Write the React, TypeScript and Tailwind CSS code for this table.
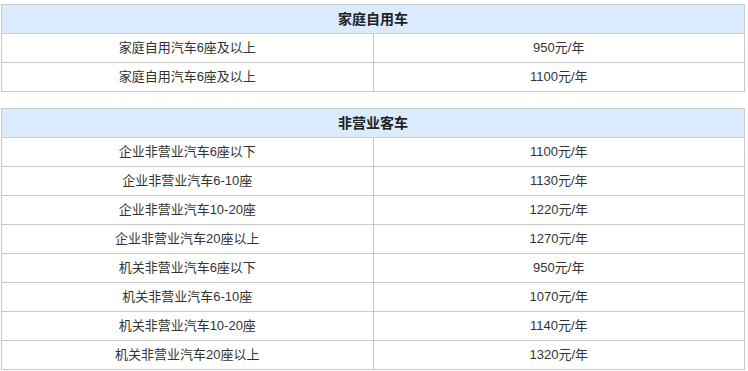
import React from 'react';

interface PriceRow {
  name: string;
  price: string;
}

const familyRows: PriceRow[] = [
  { name: '家庭自用汽车6座及以上', price: '950元/年' },
  { name: '家庭自用汽车6座及以上', price: '1100元/年' },
];

const nonOperatingRows: PriceRow[] = [
  { name: '企业非营业汽车6座以下', price: '1100元/年' },
  { name: '企业非营业汽车6-10座', price: '1130元/年' },
  { name: '企业非营业汽车10-20座', price: '1220元/年' },
  { name: '企业非营业汽车20座以上', price: '1270元/年' },
  { name: '机关非营业汽车6座以下', price: '950元/年' },
  { name: '机关非营业汽车6-10座', price: '1070元/年' },
  { name: '机关非营业汽车10-20座', price: '1140元/年' },
  { name: '机关非营业汽车20座以上', price: '1320元/年' },
];

function PriceTable({ title, rows }: { title: string; rows: PriceRow[] }) {
  return (
    <table className="ml-[1px] w-[744px] table-fixed border-collapse text-[13px] text-[#333]">
      <thead>
        <tr>
          <th
            colSpan={2}
            className="h-[29px] border border-[#c8cdd3] bg-[#d9ebfd] p-0 text-center text-[14px] font-bold text-[#222]"
          >
            {title}
          </th>
        </tr>
      </thead>
      <tbody>
        {rows.map((row, i) => (
          <tr key={i}>
            <td className="h-[29px] w-[372px] border border-[#c8c8c8] p-0 text-center">{row.name}</td>
            <td className="h-[29px] border border-[#c8c8c8] p-0 text-center">{row.price}</td>
          </tr>
        ))}
      </tbody>
    </table>
  );
}

export default function App() {
  return (
    <div
      className="h-[371px] w-[748px] bg-white pt-[4px]"
      style={{ fontFamily: '"Liberation Sans", "Noto Sans CJK SC", sans-serif' }}
    >
      <PriceTable title="家庭自用车" rows={familyRows} />
      <div className="h-[16px]" />
      <PriceTable title="非营业客车" rows={nonOperatingRows} />
    </div>
  );
}
